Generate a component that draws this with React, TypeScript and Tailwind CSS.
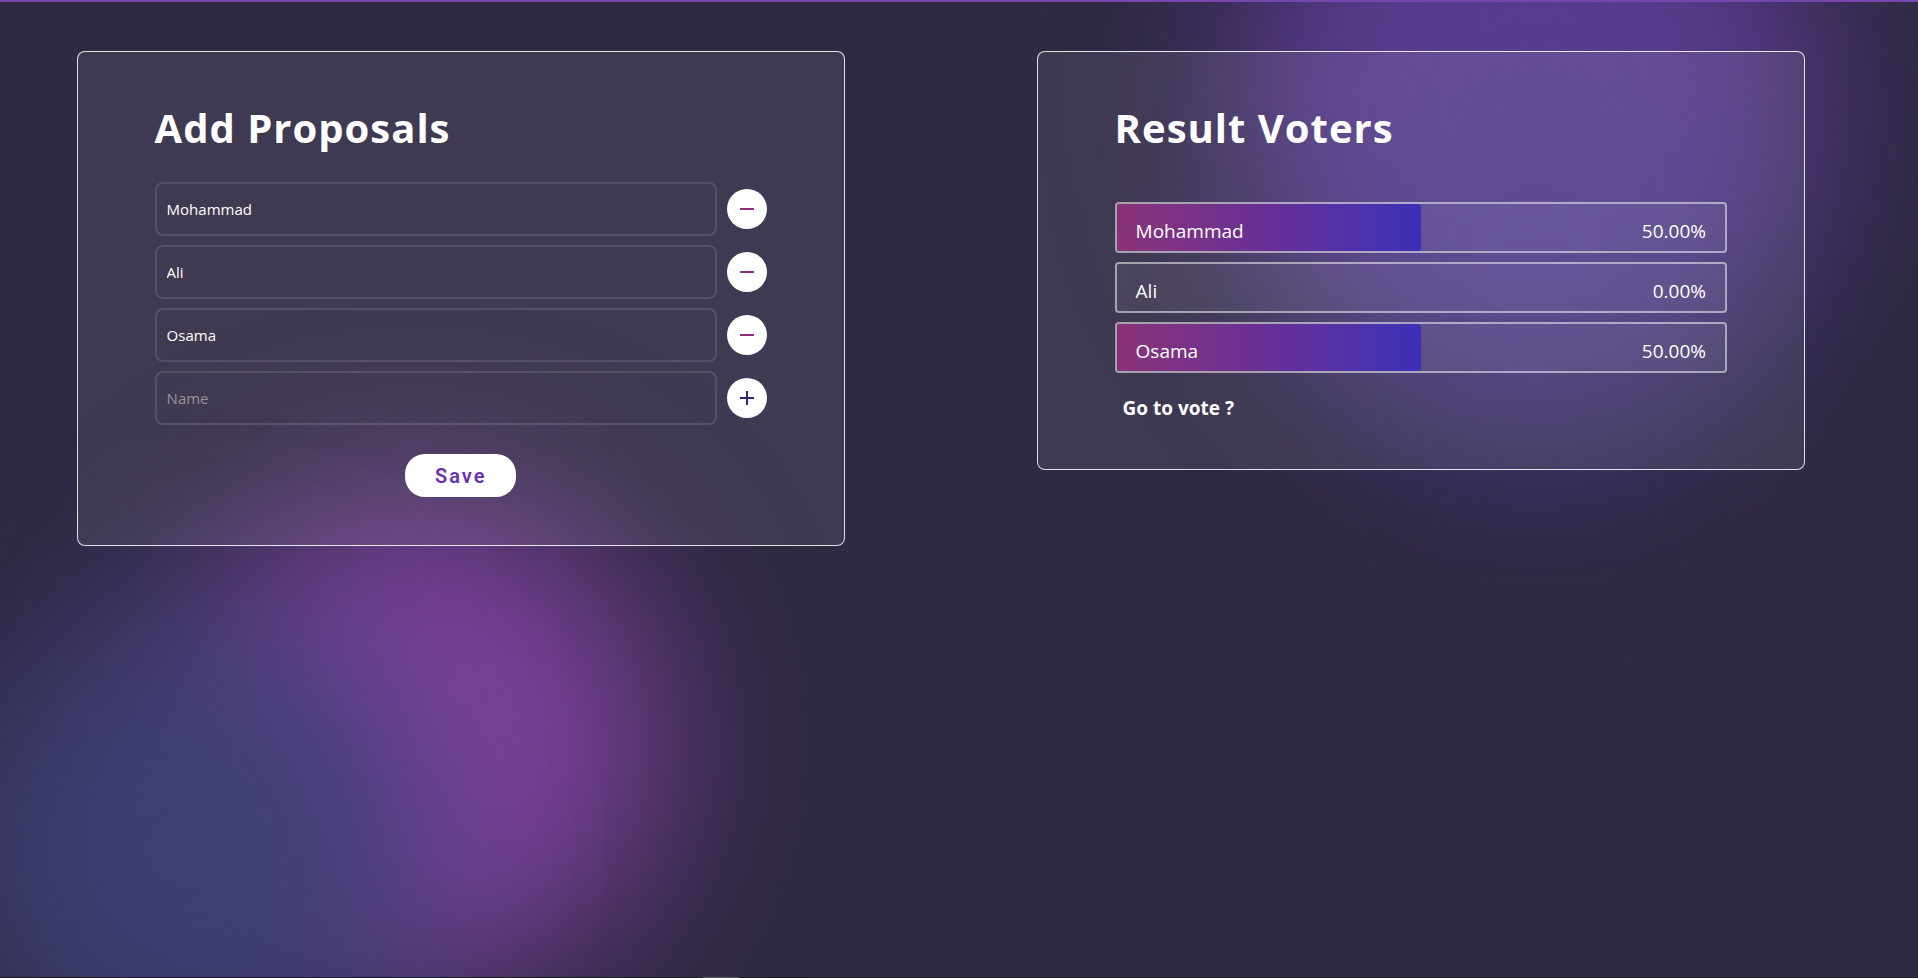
import { useState } from "react";

const results = [
  { name: "Mohammad", percent: 50 },
  { name: "Ali", percent: 0 },
  { name: "Osama", percent: 50 },
];

function Icon({ plus = false }: { plus?: boolean }) {
  return (
    <svg viewBox="0 0 14 14" className="size-[14px]" fill="currentColor" aria-hidden="true">
      <rect x="0" y="6" width="14" height="2" />
      {plus && <rect x="6" y="0" width="2" height="14" />}
    </svg>
  );
}

function Glow() {
  return (
    <div aria-hidden="true" className="pointer-events-none absolute inset-0 overflow-hidden">
      <div className="absolute -top-[200px] right-[100px] size-[580px] rounded-full bg-[#5c3c90] blur-[85px]" />
      <div className="absolute top-[20px] right-[145px] size-[470px] rounded-full bg-[#463f88]/45 blur-[80px]" />
      <div className="absolute -bottom-[10px] left-[170px] size-[490px] rounded-full bg-[#7d429b] blur-[85px]" />
      <div className="absolute -bottom-[110px] -left-[50px] size-[480px] rounded-full bg-[#3d4074]/95 blur-[85px]" />
    </div>
  );
}

const cardClass = "ml-[8%] w-[80%] rounded-lg border border-white/85 bg-white/8 px-[8%]";
const headingClass = "text-[40px] leading-[56px] font-bold tracking-wide";

export default function App() {
  const [names, setNames] = useState(["Mohammad", "Ali", "Osama"]);
  const [draft, setDraft] = useState("");

  const add = () => {
    if (draft.trim()) {
      setNames([...names, draft.trim()]);
      setDraft("");
    }
  };

  return (
    <div className="relative flex min-h-screen flex-col overflow-hidden border-t-2 border-[#7546ab] bg-[#2f2943] font-['Open_Sans','Noto_Sans',sans-serif] text-white">
      <Glow />
      <main className="relative -mr-0.5 grid flex-1 grid-cols-2 items-start pt-[49px]">
        <section className={`${cardClass} pt-12 pb-12`}>
          <h1 className={headingClass}>Add Proposals</h1>
          <form className="mt-[26px] flex flex-col" onSubmit={(e) => e.preventDefault()}>
            <div className="flex flex-col gap-[9px]">
              {names.map((name, i) => (
                <div key={i} className="flex items-center gap-[10px]">
                  <input
                    type="text"
                    aria-label={`Proposal ${i + 1}`}
                    value={name}
                    onChange={(e) => setNames(names.map((n, j) => (j === i ? e.target.value : n)))}
                    className="h-[54px] min-w-0 flex-1 rounded-lg border-2 border-[#fff8f0]/12 bg-transparent px-[10px] text-[15px] outline-none"
                  />
                  <button
                    type="button"
                    aria-label={`Remove ${name}`}
                    onClick={() => setNames(names.filter((_, j) => j !== i))}
                    className="flex size-10 items-center justify-center rounded-full bg-white text-[#8a2f7d]"
                  >
                    <Icon />
                  </button>
                </div>
              ))}
              <div className="flex items-center gap-[10px]">
                <input
                  type="text"
                  aria-label="Name"
                  placeholder="Name"
                  value={draft}
                  onChange={(e) => setDraft(e.target.value)}
                  className="h-[54px] min-w-0 flex-1 rounded-lg border-2 border-[#fff8f0]/12 bg-transparent px-[10px] text-[15px] outline-none placeholder:text-[#969398]"
                />
                <button
                  type="button"
                  aria-label="Add proposal"
                  onClick={add}
                  className="flex size-10 items-center justify-center rounded-full bg-white text-[#2f2a78]"
                >
                  <Icon plus />
                </button>
              </div>
            </div>
            <button
              type="submit"
              className="mt-[29px] h-[43px] w-[111px] self-center rounded-[20px] bg-white font-['Roboto',sans-serif] text-[20px] font-semibold tracking-widest text-[#6b2fb5]"
            >
              Save
            </button>
          </form>
        </section>

        <section className={`${cardClass} pt-12 pb-[46px]`}>
          <h1 className={headingClass}>Result Voters</h1>
          <ul className="mt-[46px] flex flex-col gap-[9px]">
            {results.map(({ name, percent }) => (
              <li
                key={name}
                className="relative flex h-[51px] items-center justify-between rounded border-2 border-white/50 bg-white/6 px-[19px] pt-2 text-[19px]"
              >
                <div
                  className="absolute inset-y-0 left-0 rounded-[3px] bg-linear-to-r from-[#8a3278] via-[#672f96] to-[#3b2fb8]"
                  style={{ width: `${percent}%` }}
                />
                <span className="relative">{name}</span>
                <span className="relative">{percent.toFixed(2)}%</span>
              </li>
            ))}
          </ul>
          <a href="#vote" className="mt-[20px] ml-2 inline-block text-[19px] leading-[30px] font-bold">
            Go to vote ?
          </a>
        </section>
      </main>
      <footer className="relative h-px bg-[#1f1b22]">
        <div className="ml-[703px] h-px w-9 bg-[#5c5962]" />
      </footer>
    </div>
  );
}
